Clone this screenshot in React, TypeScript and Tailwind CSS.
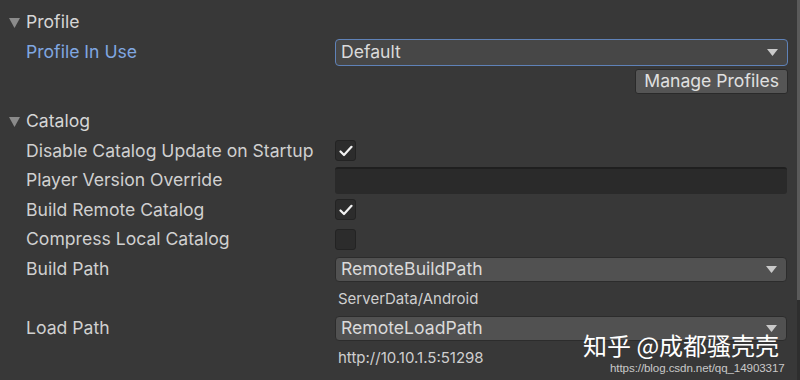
import React from 'react';

const font = { fontFamily: 'Inter, "Noto Sans", "Noto Sans CJK SC", sans-serif' };

function Foldout({ label }: { label: string }) {
	return (
		<div className="flex items-center h-[30px] pl-[9px] text-[#d6d6d6] text-[17.6px]">
			<svg width="11" height="10" viewBox="0 0 11 10" className="mr-[6px] mt-[1px]">
				<polygon points="0,0 11,0 5.5,10" fill="#8b8b8b" />
			</svg>
			<span>{label}</span>
		</div>
	);
}

function Arrow() {
	return (
		<svg width="11" height="7" viewBox="0 0 11 7">
			<polygon points="0,0 11,0 5.5,7" fill="#c9c9c9" />
		</svg>
	);
}

function Dropdown({ value, focused }: { value: string; focused?: boolean }) {
	return (
		<div
			className={
				focused
					? 'flex items-center justify-between h-[27px] w-[453px] rounded-[4px] border border-[#5f82b8] bg-[#474747] pl-[5px] pr-[9px] text-[#dadada] text-[17.6px]'
					: 'flex items-center justify-between h-[25px] w-[452px] rounded-[4px] border border-[#2c2c2c] bg-[#515151] pl-[5px] pr-[9px] text-[#dadada] text-[17.6px]'
			}
		>
			<span>{value}</span>
			<Arrow />
		</div>
	);
}

function Check({ on }: { on?: boolean }) {
	return (
		<div className="flex items-center justify-center w-[21px] h-[21px] rounded-[3px] border border-[#232323] bg-[#2c2c2c]">
			{on && (
				<svg width="14" height="12" viewBox="0 0 14 12">
					<path d="M1.5 6.5 L5 10 L12.5 1.8" stroke="#f2f2f2" strokeWidth="2.2" fill="none" strokeLinecap="round" strokeLinejoin="round" />
				</svg>
			)}
		</div>
	);
}

function Row({ label, children }: { label?: string; children?: React.ReactNode }) {
	return (
		<div className="flex items-center h-[29.6px]">
			<div className="w-[335px] pl-[26px] text-[17.6px] text-[#d0d0d0]">{label}</div>
			<div className="flex-1 flex items-center">{children}</div>
		</div>
	);
}

export default function App() {
	return (
		<div className="relative w-[800px] h-[380px] overflow-hidden bg-[#383838] flex" style={font}>
			<div className="flex-1 pt-[7px]">
				<Foldout label="Profile" />
				<div className="flex items-center h-[30px]">
					<div className="w-[335px] pl-[26px] text-[17.6px] text-[#80a7e1]">Profile In Use</div>
					<Dropdown value="Default" focused />
				</div>
				<div className="flex justify-end h-[29px] items-center pr-[9px]">
					<div className="flex items-center h-[25px] px-[8px] rounded-[3px] border border-[#2a2a2a] bg-[#555555] text-[17.6px] text-[#e0e0e0]">
						Manage Profiles
					</div>
				</div>
				<div className="h-[10px]" />
				<Foldout label="Catalog" />
				<Row label="Disable Catalog Update on Startup">
					<Check on />
				</Row>
				<Row label="Player Version Override">
					<div className="h-[27px] w-[452px] rounded-[3px] border-t-2 border-[#1f1f1f] bg-[#2a2a2a]" />
				</Row>
				<Row label="Build Remote Catalog">
					<Check on />
				</Row>
				<Row label="Compress Local Catalog">
					<Check />
				</Row>
				<Row label="Build Path">
					<Dropdown value="RemoteBuildPath" />
				</Row>
				<Row>
					<span className="pl-[3px] text-[15px] text-[#cfcfcf]">ServerData/Android</span>
				</Row>
				<Row label="Load Path">
					<Dropdown value="RemoteLoadPath" />
				</Row>
				<Row>
					<span className="pl-[3px] text-[15px] text-[#cfcfcf]">http://10.10.1.5:51298</span>
				</Row>
			</div>
			<div className="w-[3px] flex flex-col">
				<div className="h-[300px] bg-[#5a5a5a]" />
				<div className="flex-1 bg-[#2e2e2e]" />
			</div>

			<div className="absolute left-[583px] top-[331px] text-[24px] leading-[28px] text-white" style={{ fontFamily: '"Noto Sans CJK SC", sans-serif' }}>
				知乎 @成都骚壳壳
			</div>
			<div className="absolute left-[610px] top-[360px] text-[11.6px] leading-[15px] tracking-[-0.1px] text-[#c8c8c8]" style={{ fontFamily: '"Liberation Sans", Arial, sans-serif' }}>
				https://blog.csdn.net/qq_14903317
			</div>
		</div>
	);
}
